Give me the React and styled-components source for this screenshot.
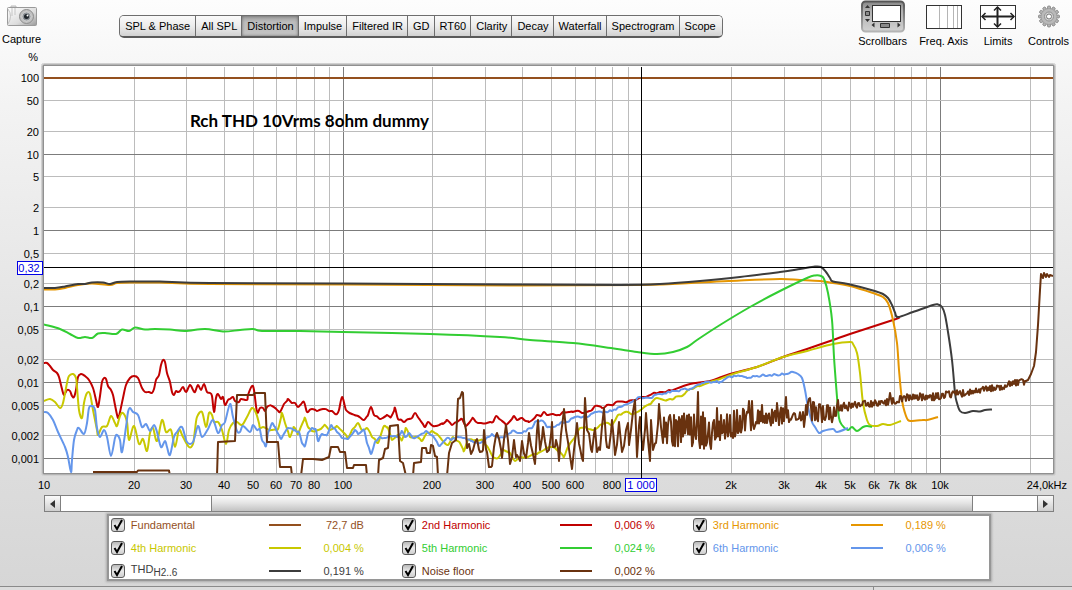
import React from 'react';
import styled, { createGlobalStyle } from 'styled-components';

const GlobalStyle = createGlobalStyle`
  * {
    box-sizing: border-box;
  }
  body {
    margin: 0;
    color: #000;
    font: 11px/14px "Liberation Sans", Arial, sans-serif;
  }
  button, input {
    margin: 0;
    color: inherit;
    font: inherit;
  }
`;

const Page = styled.div`
  display: flex;
  flex-direction: column;
  min-height: 100vh;
  background: linear-gradient(#fdfdfd, #f3f3f3 18%, #e4e4e4 55%, #d6d6d6);
`;

const Toolbar = styled.header`
  display: flex;
  align-items: flex-start;
  height: 52px;
  padding: 0 3px 0 2px;
`;

const Tabs = styled.nav`
  display: flex;
  height: 23px;
  margin: 15px auto 0 78px;
  border: 1px solid #6e6e6e;
  border-bottom: 2px solid #5a5a5a;
  border-radius: 5px;
  overflow: hidden;
`;

const Tab = styled.button`
  padding: 0 4px 0 5px;
  border: 0;
  border-right: 1px solid #6e6e6e;
  white-space: nowrap;
  background: ${({ $active }) => ($active
    ? 'linear-gradient(#9c9c9c, #bcbcbc 30%, #c4c4c4)'
    : 'linear-gradient(#fafafa, #ececec 50%, #d2d2d2)')};
  box-shadow: ${({ $active }) => ($active ? 'inset 0 0 3px #666' : 'none')};

  &:first-child {
    padding: 0 5px;
  }
  &:last-child {
    padding: 0 6px 0 5px;
    border-right: 0;
  }
`;

const Tools = styled.div`
  display: flex;
  gap: 12px;
`;

const Tool = styled.button`
  display: flex;
  flex-direction: column;
  align-items: center;
  gap: 1px;
  padding: ${({ $top }) => $top || 0}px 0 0;
  border: 0;
  background: none;
  white-space: nowrap;

  svg {
    display: block;
  }
`;

const Chart = styled.svg`
  display: block;
  width: 100%;
  height: auto;

  text {
    font: 11px "Liberation Sans", Arial, sans-serif;
  }
  .note {
    font: bold 17px Lato, "Open Sans", sans-serif;
  }
`;

const Lower = styled.div`
  display: flex;
  flex-direction: column;
  align-items: center;
  gap: 2px;
  margin-top: 1px;
  padding: 0 1.7% 0 4.1%;
`;

const Scrollbar = styled.div`
  display: flex;
  width: 100%;
  height: 17px;
  border: 1px solid #808080;
  background: #fff;
`;

const ScrollArrow = styled.button`
  display: grid;
  place-items: center;
  width: 15px;
  padding: 0;
  border: 0;
  background: linear-gradient(#fafafa, #cfcfcf);
`;

const Track = styled.div`
  display: flex;
  flex: 1;
  border: solid #808080;
  border-width: 0 1px;
`;

const Thumb = styled.div`
  border: solid #808080;
  border-width: 0 1px;
  background: linear-gradient(#fbfbfb, #e2e2e2 50%, #c2c2c2);
`;

const Legend = styled.section`
  display: grid;
  grid-template-columns: repeat(3, 291px);
  grid-auto-rows: 23px;
  align-items: center;
  align-content: center;
  width: 884px;
  max-width: 100%;
  height: 67px;
  padding-left: 2px;
  border: 2px solid #969696;
  background: #fff;
  box-shadow: 0 0 2px 1px #aaa;
  overflow: hidden;
`;

const LegendItem = styled.div`
  display: flex;
  align-items: center;
  color: ${({ $color }) => $color};
  height: 20px;
`;

const Name = styled.label`
  display: flex;
  align-items: center;
  gap: 6px;
  width: 158px;
  white-space: nowrap;

  sub {
    line-height: 1;
    font-size: 10px;
  }
`;

const Check = styled.span`
  position: relative;
  width: 14px;
  height: 14px;

  svg {
    position: absolute;
    inset: 0;
    pointer-events: none;
  }
`;

const CheckInput = styled.input`
  display: block;
  width: 14px;
  height: 14px;
  appearance: none;
  border: 1px solid #5c5c5c;
  border-radius: 3px;
  background: linear-gradient(#b9b9b9, #e9e9e9 50%, #cfcfcf);

  & + svg {
    visibility: hidden;
  }
  &:checked + svg {
    visibility: visible;
  }
`;

const Swatch = styled.span`
  width: 32px;
  height: 2px;
  background: currentColor;
`;

const Value = styled.output`
  width: 63px;
  text-align: right;
`;

const StatusBar = styled.footer`
  display: flex;
  height: 4px;
  margin-top: auto;
  border-top: 1px solid #8a8a8a;
  background: #dcdcdc;
`;

const StatusCell = styled.div`
  width: 81.5%;
  border-right: 1px solid #8a8a8a;
`;

const tabs = ['SPL & Phase', 'All SPL', 'Distortion', 'Impulse', 'Filtered IR', 'GD', 'RT60',
  'Clarity', 'Decay', 'Waterfall', 'Spectrogram', 'Scope'];

const legend = [
  { id: 'fund', name: 'Fundamental', color: '#94501e', value: '72,7 dB' },
  { id: 'h2', name: '2nd Harmonic', color: '#c00000', value: '0,006 %' },
  { id: 'h3', name: '3rd Harmonic', color: '#e69600', value: '0,189 %' },
  { id: 'h4', name: '4th Harmonic', color: '#c8c800', value: '0,004 %' },
  { id: 'h5', name: '5th Harmonic', color: '#32cd32', value: '0,024 %' },
  { id: 'h6', name: '6th Harmonic', color: '#6496eb', value: '0,006 %' },
  { id: 'thd', name: 'THD', sub: 'H2..6', color: '#3c3c3c', value: '0,191 %' },
  { id: 'noise', name: 'Noise floor', color: '#69320f', value: '0,002 %' },
];

// log scales: one decade is 298.7 wide and 76.2 high
const LEFT = 44;
const RIGHT = 1053;
const TOP = 67;
const BOTTOM = 473;
const fx = (hz) => Math.round(43.8 + (Math.log10(hz) - 1) * 298.7);
const fy = (pct) => Math.round(77.3 + (2 - Math.log10(pct)) * 76.2);

const freqLines = [];
[10, 100, 1000, 10000].forEach((decade) => {
  for (let n = 1; n < 10; n++) {
    const hz = n * decade;
    if (hz > 10 && hz < 24000) freqLines.push({ hz, major: n === 1 });
  }
});

const levels = [100, 50, 20, 10, 5, 2, 1, 0.5, 0.2, 0.1, 0.05, 0.02, 0.01, 0.005, 0.002, 0.001];
const isDecade = (v) => Number.isInteger(Math.round(Math.log10(v) * 1000) / 1000);
const freqLabels = [10, 20, 30, 40, 50, 60, 70, 80, 100, 200, 300, 400, 500, 600, 800,
  2000, 3000, 4000, 5000, 6000, 7000, 8000, 10000];

const h2 = '44,363 47,363 50,366 53,370 57,373 59,377 62,389 64,395 67,390 70,391 72,396 74,397 76,390 78,377 81,374 85,376 89,380 93,388 96,400 98,407 100,396 102,382 104,378 106,379 108,386 111,390 113,395 115,405 118,418 120,412 123,398 126,385 130,378 134,376 138,378 142,388 145,392 149,392 152,393 154,389 156,380 159,375 161,365 163,360 165,362 167,373 170,382 172,392 174,395 176,391 178,392 180,391 183,387 186,392 190,385 193,390 195,392 198,385 201,390 204,384 207,392 210,393 212,396 214,412 216,398 218,394 221,399 223,397 225,405 228,400 230,399 233,397 235,401 239,402 241,399 247,400 248,395 252,386 254,390 257,412 260,408 263,408 265,411 267,407 272,406 280,412 284,404 288,399 292,403 295,403 298,407 304,402 307,412 312,409 317,411 323,409 332,411 337,414 339,410 342,397 346,410 352,414 358,416 364,420 368,415 371,407 374,415 380,419 387,415 391,417 395,408 398,419 404,422 412,418 415,413 420,420 425,427 428,422 433,426 443,424 447,420 452,425 457,422 462,419 466,426 473,418 478,423 487,423 493,422 496,416 506,425 514,416 517,420 522,418 529,422 537,415 541,416 544,412 547,415 553,414 560,415 563,412 573,412 579,411 582,413 592,410 595,406 602,408 607,405 613,405 616,402 627,402 642,397 660,392 673,390 690,384 710,381 730,374 757,367 783,357 807,349 833,340 850,334 893,320 900,317';
const thdTail = '913,312 933,305 938,304.5 942,307 945,315 948,332 952,360 955,393 957,403 960,411 965,413 973,411 980,411.5 985,410 992,409.5';
const h3 = '44,289.5 55,289.5 65,288 78,285 92,283.5 110,285 117,283 133,282.5 160,282.5 210,284 343,284.5 520,285.5 640,285 700,282.5 740,280.5 780,279 800,280 820,281 833,283 850,286 873,293 883,297 888,303 893,320 897,343 899,370 902,400 905,413 908,420 912,421 923,420 927,420 938,417';
const h4 = '44,401 50,399 55,402 60,408 63,403 67,383 69,376 73,374 76,378 77,387 79,410 82,418 84,403 87,393 90,394 93,410 97,430 98,435 102,427 107,426 111,416 115,423 117,426 120,416 123,413 127,422 129,440 134,426 139,444 143,439 147,451 150,433 153,428 157,441 162,420 166,432 171,430 175,447 179,430 183,437 189,447 193,444 195,430 197,417 202,412 206,427 209,413 212,415 214,422 218,422 222,430 226,444 229,430 233,423 237,422 242,425 247,417 252,408 256,413 260,428 263,427 269,430 278,429 282,413 285,423 290,437 294,427 298,434 305,418 308,427 312,431 318,430 325,425 330,430 337,426 343,432 348,438 352,430 358,423 362,430 367,428 372,437 378,443 384,426 388,428 392,440 398,435 402,440 406,428 410,437 417,437 422,441 427,433 432,431 437,434 442,440 448,445 453,437 460,443 464,451 468,440 475,440 482,440 487,446 493,457 498,458 503,450 510,453 515,461 520,457 528,457 538,453 547,448 555,448 560,452 564,457 568,447 575,437 580,428 585,427 593,430 600,425 605,423 612,425 618,415 623,413 628,412 633,414 642,409 652,402 657,398 667,400 682,396 687,391 700,386 710,382 720,379 733,374 757,367 783,357 807,351 833,344 850,342 853,344 857,353 860,373 863,403 867,420 870,425 877,426 883,424 890,425 901,421';
const h5 = '44,324.5 60,329 70,334 78,338 85,337 92,338 98,333.5 105,333 116,334 122,329.5 129,331 135,327.5 145,329.5 155,329 170,329.5 185,331 205,329 223,331.5 240,330 253,329 262,331 300,331 343,332 430,334 500,337 530,340 573,343 611,348 637,352 657,354 673,352 687,347 697,340 720,325 750,307 780,291 807,278 815,275.5 821,276 824,279 828,293 832,320 834,357 837,397 839,418 842,425 848,430 852,427 857,431 863,427 867,426 872,427';
const h6 = '44,412 48,413 53,420 58,432 65,447 68,457 71,472 72,460 74,440 77,430 79,428 84,434 87,423 89,408 92,406 95,410 97,428 100,437 104,430 107,437 111,456 115,438 117,435 120,440 122,452 126,427 128,412 130,408 133,412 138,415 142,427 146,424 150,431 154,425 157,432 161,447 165,441 167,447 170,455 174,437 177,432 182,427 187,442 193,442 198,426 202,437 208,429 213,420 218,433 222,425 225,422 230,404 233,417 237,431 240,432 243,426 250,432 253,425 257,430 260,430 262,440 266,446 268,433 272,423 275,427 281,439 288,428 295,430 299,432 302,443 305,446 308,433 312,428 316,430 318,441 322,434 327,435 331,425 337,432 342,438 348,439 355,430 358,434 364,430 367,443 371,454 375,442 380,437 385,438 390,436 397,437 402,431 405,437 409,433 413,438 420,435 426,431 433,436 439,446 447,438 451,440 457,437 463,438 472,441 478,443 485,440 492,434 497,437 505,437 512,431 520,433 532,428 535,422 543,421 547,427 553,427 562,422 567,422 575,417 587,417 595,412 608,412 620,407 630,403 640,397 650,398 660,394 673,391 690,389 707,382 720,382 728,377 740,376 747,378 757,376 770,375 787,374 793,372 798,374 802,378 805,390 808,407 812,422 815,427 819,433 823,431 833,429 837,432 848,428';
const thd = '44,288 55,288 65,286.5 78,284 85,284 92,282.5 103,282.5 110,284 117,282 133,281.5 160,281.5 210,283 343,283.5 520,284.5 620,285 660,284 700,281 740,277 780,272 800,269 815,266.5 821,267 826,272 830,278 833,281.5 848,284 873,290.5 883,294 888,298 892,305 895,312.5 898,317';
const noise = '93,472 137,472 138,470.5 169,470.5 170,476 217,476 218,442 235,441 237,395 253,395 255,393 265,393 267,442 278,442 280,467 291,467 292,476 301,476 303,459 313,459 322,460 329,457 331,447 338,447 340,452 345,452 347,468 353,468 354,465 366,465 367,476 378,476 379,460 383,458 385,449 388,448 390,426 398,425 400,461 403,463 406,476 413,476 414,463 421,462 422,448 426,448 427,453 430,453 431,445 433,446 435,456 437,457 438,476 447,476 449,453 452,443 456,440 458,399 460,398 462,392 463,393 464,420 466,430 467,448 471,454 473,450 477,439 480,452 483,450 484,430 487,452 489,467 492,466 494,447 497,433 502,458 506,425 510,464 514,440 517,455 520,461 522,441 526,458 529,433 535,464 538,420 540,450 543,427 547,452 549,450 552,422 553,447 556,440 559,461 564,409 566,430 568,442 572,469 577,423 580,448 583,461 585,398 587,430 592,452 595,428 597,452 600,450 604,408 607,447 609,448 612,420 615,455 619,422 622,452 628,423 629,445 635,400 637,457 640,417 643,450 646,413 648,440 650,461 651,420 653,450 656,443 659,404 661,427 663,443';

// [x, upper, lower] limits of the noise above 1.2 kHz
const envelope = [
  [663, 418, 448], [680, 411, 447], [705, 411, 449], [722, 414, 440], [735, 409, 438], [750, 408, 431],
  [765, 408, 428], [785, 407, 425], [792, 411, 420], [804, 411, 421], [808, 398, 424], [815, 401, 424],
  [824, 406, 423], [836, 403, 423], [840, 403, 413], [860, 401, 408], [890, 398, 405], [905, 394, 402],
  [940, 392, 400], [975, 388, 395], [1005, 383, 389], [1012, 379, 386], [1026, 379, 385],
];
const spikes = '670,415 698,392 699,440 711,449 717,408 749,401 752,401 762,405 777,403 786,397 804,427 810,398 838,400 890,393';

const points = (text) => text.split(' ').map((pair) => pair.split(',').map(Number));

const createRandom = (seed) => () => {
  seed = (seed * 16807) % 2147483647;
  return seed / 2147483647;
};

const denseNoise = () => {
  const peaks = new Map(points(spikes));
  const random = createRandom(29);
  let out = '';
  for (let x = 664, up = true; x < 1027; x++) {
    const i = envelope.findIndex(([ex]) => ex > x) - 1;
    const [a, b] = i < 0 ? envelope.slice(-2) : [envelope[i], envelope[i + 1]];
    const t = Math.min(1, (x - a[0]) / (b[0] - a[0]));
    const high = a[1] + (b[1] - a[1]) * t;
    const low = a[2] + (b[2] - a[2]) * t;
    const reach = (low - high) * 0.4 * random();
    const y = peaks.get(x) || (up ? high + reach : low - reach);
    up = random() > 0.3 ? !up : up;
    out += ` ${x},${y.toFixed(1)}`;
  }
  return out;
};

// adds measurement ripple between two x positions
const roughen = (text, from, to, amount, step = 2) => {
  const random = createRandom(71);
  const p = points(text);
  const out = [];
  p.forEach(([x, y], i) => {
    out.push(`${x},${y}`);
    const next = p[i + 1];
    if (!next || x < from || x > to) return;
    for (let mid = x + step; mid < next[0]; mid += step) {
      const t = (mid - x) / (next[0] - x);
      const bump = (random() - 0.5) * 2 * amount;
      out.push(`${mid},${(y + (next[1] - y) * t + bump).toFixed(1)}`);
    }
  });
  return out.join(' ');
};

const noiseLine = `${roughen(noise, 466, 664, 7)}${denseNoise()} 1028,380 1031,374 1034,366 1036,352 1038,325 1040,290 1041,274 1043,278 1044,273 1046,277 1047,274 1049,277 1050,275 1053,276`;

const smooth = (text) => {
  const p = points(text);
  return p.reduce((d, [x, y], i) => {
    if (i === 0) return `M${x} ${y}`;
    const [x0, y0] = p[i - 1];
    const before = p[i - 2] || p[i - 1];
    const after = p[i + 1] || p[i];
    const c1 = [x0 + (x - before[0]) / 6, y0 + (y - before[1]) / 6];
    const c2 = [x - (after[0] - x0) / 6, y - (after[1] - y0) / 6];
    return `${d}C${c1.map((v) => v.toFixed(1))} ${c2.map((v) => v.toFixed(1))} ${x} ${y}`;
  }, '');
};

const formatHz = (hz) => (hz >= 2000 ? `${hz / 1000}k` : String(hz));

const CameraIcon = () => (
  <svg width="32" height="26" viewBox="0 0 32 26">
    <defs>
      <linearGradient id="cam" x2="1" y2="1">
        <stop offset="0" stopColor="#fff" />
        <stop offset=".6" stopColor="#ddd" />
        <stop offset="1" stopColor="#999" />
      </linearGradient>
    </defs>
    <path d="M5 3V1h5v2" fill="#ddd" stroke="#bbb" />
    <rect x="1.500" y="2.500" width="29" height="18" rx="1" fill="url(#cam)" stroke="#9a9a9a" />
    <path d="M2 4q5 7 0 15M6 3v8M9 3v7" fill="none" stroke="#c4c4c4" />
    <circle cx="20.500" cy="11.500" r="7" fill="#c2c2c2" stroke="#8c8c8c" />
    <circle cx="20.500" cy="11.500" r="4.500" fill="#8d9297" stroke="#d3d3d3" />
    <circle cx="20.500" cy="11.500" r="2.500" fill="#1e242a" />
    <circle cx="21.500" cy="10.500" r="1" fill="#fff" />
  </svg>
);

const ScrollbarsIcon = () => (
  <svg width="44" height="33" viewBox="0 0 44 33">
    <defs>
      <linearGradient id="pressed" x2="0" y2="1">
        <stop offset="0" stopColor="#858585" />
        <stop offset=".3" stopColor="#b0b0b0" />
        <stop offset="1" stopColor="#d2d2d2" />
      </linearGradient>
      <linearGradient id="pressedEdge" x2="0" y2="1">
        <stop offset="0" stopColor="#555" />
        <stop offset="1" stopColor="#b4b4b4" />
      </linearGradient>
    </defs>
    <rect x="1" y="1.500" width="42" height="30" rx="3.500" fill="url(#pressed)" stroke="url(#pressedEdge)" strokeWidth="2" />
    <rect x="11.500" y="5.500" width="28" height="16" fill="#fff" stroke="#333" />
    <path d="M4 8l2.500-3L9 8zM4 19l2.500 3L9 19zM13.500 22.500v5l-3-2.500zM36.500 22.500v5l3-2.500z" fill="#333" />
    <path d="M4.500 11.500h4v4h-4zM19.500 23.500h9v4h-9z" fill="#8a8a8a" stroke="#333" />
  </svg>
);

const FreqAxisIcon = () => (
  <svg width="36" height="33" viewBox="0 0 36 33">
    <rect x=".5" y="5.500" width="35" height="23" fill="#fff" stroke="#333" />
    <path d="M13.500 6v22M21.500 6v22M27.500 6v22M31.500 6v22" stroke="#b5b5b5" />
  </svg>
);

const LimitsIcon = () => (
  <svg width="36" height="33" viewBox="0 0 36 33">
    <rect x=".5" y="5.500" width="35" height="23" fill="#fff" stroke="#333" />
    <path d="M2 16.500h32M17.500 7v20" stroke="#222" strokeWidth="2" />
    <path d="M5.500 13L2 16.500 5.500 20M30.500 13l3.500 3.500-3.500 3.500M14 10.500L17.500 7l3.500 3.500M14 23.500l3.500 3.500 3.500-3.500" fill="none" stroke="#222" strokeWidth="1.500" />
  </svg>
);

const teeth = Array.from({ length: 12 }, (_, i) => i * 30);

const GearIcon = () => (
  <svg width="24" height="33" viewBox="0 0 24 33">
    {teeth.map((angle) => (
      <rect key={angle} x="10.500" y="6" width="3" height="5" rx="1" fill="#b4b4b4" stroke="#777" strokeWidth=".7" transform={`rotate(${angle} 12 16.500)`} />
    ))}
    <circle cx="12" cy="16.500" r="8" fill="#b9b9b9" stroke="#8c8c8c" strokeWidth=".5" />
    <circle cx="12" cy="16.500" r="4.500" fill="#d6d6d6" stroke="#909090" />
    <circle cx="12" cy="16.500" r="2.500" fill="#fff" stroke="#777" />
  </svg>
);

const Grid = () => (
  <g shapeRendering="crispEdges">
    {freqLines.map(({ hz, major }) => (
      <path key={hz} d={`M${fx(hz) + 0.5} ${TOP}V${BOTTOM}`} stroke={major ? '#7c7c7c' : '#bcbcbc'} />
    ))}
    {levels.map((v) => (
      <path key={v} d={`M${LEFT} ${fy(v) + 0.5}H${RIGHT}`} stroke={isDecade(v) ? '#7c7c7c' : '#bcbcbc'} />
    ))}
  </g>
);

const DistortionChart = () => (
  <Chart viewBox="0 52 1072 442" role="img" aria-label="Distortion against frequency">
    <defs>
      <clipPath id="plot">
        <rect x={LEFT} y={TOP} width={RIGHT - LEFT} height={BOTTOM - TOP} />
      </clipPath>
    </defs>
    <rect x="41.500" y="63.500" width="1014" height="412" rx="2" fill="none" stroke="#d0d0d0" />
    <rect x="42.500" y="64.500" width="1012" height="410" rx="1" fill="none" stroke="#b4b4b4" />
    <rect x="43.500" y="65.500" width="1010" height="408" fill="#fff" stroke="#909090" />
    <Grid />
    <g clipPath="url(#plot)" fill="none" strokeWidth="2" strokeLinejoin="round">
      <path d={`M${LEFT} 78H${RIGHT}`} stroke="#94501e" />
      <path d={smooth(roughen(h2, 254, 660, 1, 3))} stroke="#c00000" />
      <path d={smooth(h3)} stroke="#e69600" />
      <path d={smooth(roughen(h4, 254, 690, 1, 3))} stroke="#c8c800" />
      <path d={smooth(h5)} stroke="#32cd32" />
      <path d={smooth(roughen(h6, 254, 790, 1))} stroke="#6496eb" />
      <path d={smooth(`${thd} ${thdTail}`)} stroke="#3c3c3c" />
      <polyline points={noiseLine} stroke="#69320f" />
    </g>
    <path d={`M641.500 ${TOP}V478M${LEFT} 267.500H${RIGHT}`} stroke="#000" shapeRendering="crispEdges" />
    <text className="note" x="190" y="127">Rch THD 10Vrms 8ohm dummy</text>
    <text x="38" y="61" textAnchor="end">%</text>
    {levels.map((v) => (
      <text key={v} x="39" y={fy(v) + 5} textAnchor="end">{String(v).replace('.', ',')}</text>
    ))}
    {freqLabels.map((hz) => (
      <text key={hz} x={fx(hz)} y="489" textAnchor="middle">{formatHz(hz)}</text>
    ))}
    <text x="1067" y="489" textAnchor="end">24,0kHz</text>
    <g fill="#fff" stroke="#0000e6">
      <rect x="17.500" y="261.500" width="25" height="13" />
      <rect x="625.500" y="478.500" width="31" height="13" />
    </g>
    <g fill="#0000e6" textAnchor="middle">
      <text x="29" y="272">0,32</text>
      <text x="641" y="489">1 000</text>
    </g>
  </Chart>
);

const App = () => (
  <Page>
    <GlobalStyle />
    <Toolbar>
      <Tool type="button" $top={5}>
        <CameraIcon />
        Capture
      </Tool>
      <Tabs aria-label="Graphs">
        {tabs.map((name) => (
          <Tab key={name} type="button" $active={name === 'Distortion'}>{name}</Tab>
        ))}
      </Tabs>
      <Tools>
        <Tool type="button" aria-pressed="true"><ScrollbarsIcon />Scrollbars</Tool>
        <Tool type="button"><FreqAxisIcon />Freq. Axis</Tool>
        <Tool type="button"><LimitsIcon />Limits</Tool>
        <Tool type="button"><GearIcon />Controls</Tool>
      </Tools>
    </Toolbar>
    <DistortionChart />
    <Lower>
      <Scrollbar>
        <ScrollArrow type="button" aria-label="Scroll left">
          <svg width="5" height="8"><path d="M5 0v8L0 4z" fill="#333" /></svg>
        </ScrollArrow>
        <Track>
          <Thumb style={{ marginLeft: '15.4%', width: '78.1%' }} />
        </Track>
        <ScrollArrow type="button" aria-label="Scroll right">
          <svg width="5" height="8"><path d="M0 0v8l5-4z" fill="#333" /></svg>
        </ScrollArrow>
      </Scrollbar>
      <Legend>
        {legend.map(({ id, name, sub, color, value }) => (
          <LegendItem key={id} $color={color}>
            <Name htmlFor={id}>
              <Check>
                <CheckInput type="checkbox" id={id} defaultChecked />
                <svg width="14" height="14"><path d="M3.500 7l2.500 4 5-9" fill="none" stroke="#000" strokeWidth="2" /></svg>
              </Check>
              <span>{name}{sub && <sub>{sub}</sub>}</span>
            </Name>
            <Swatch />
            <Value htmlFor={id}>{value}</Value>
          </LegendItem>
        ))}
      </Legend>
    </Lower>
    <StatusBar>
      <StatusCell />
    </StatusBar>
  </Page>
);

export default App;
